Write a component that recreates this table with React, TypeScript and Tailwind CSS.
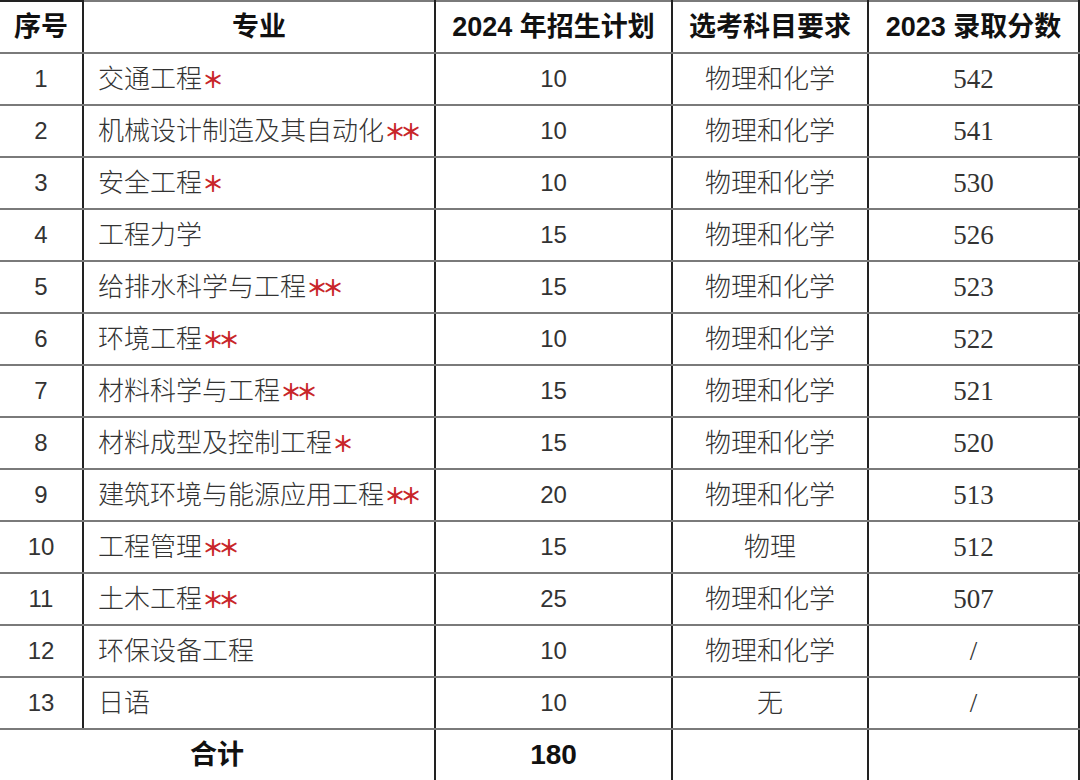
const rows: [string, string, number, string, string, string][] = [
  ['1', '交通工程', 1, '10', '物理和化学', '542'],
  ['2', '机械设计制造及其自动化', 2, '10', '物理和化学', '541'],
  ['3', '安全工程', 1, '10', '物理和化学', '530'],
  ['4', '工程力学', 0, '15', '物理和化学', '526'],
  ['5', '给排水科学与工程', 2, '15', '物理和化学', '523'],
  ['6', '环境工程', 2, '10', '物理和化学', '522'],
  ['7', '材料科学与工程', 2, '15', '物理和化学', '521'],
  ['8', '材料成型及控制工程', 1, '15', '物理和化学', '520'],
  ['9', '建筑环境与能源应用工程', 2, '20', '物理和化学', '513'],
  ['10', '工程管理', 2, '15', '物理', '512'],
  ['11', '土木工程', 2, '25', '物理和化学', '507'],
  ['12', '环保设备工程', 0, '10', '物理和化学', '/'],
  ['13', '日语', 0, '10', '无', '/'],
]

const sans = "font-['Liberation_Sans','Noto_Sans_CJK_SC',sans-serif]"
const cell = 'h-[52px] border-y-2 border-y-[#7a7a7a] border-x-2 border-x-[#222] p-0'

export default function App() {
  return (
    <div className={`h-[780px] w-[1080px] bg-white ${sans}`}>
      <table className="table-fixed border-collapse text-[#333]">
        <colgroup>
          <col className="w-[83px]" />
          <col className="w-[352px]" />
          <col className="w-[237px]" />
          <col className="w-[196px]" />
          <col className="w-[211px]" />
        </colgroup>
        <thead>
          <tr className="text-[27px] font-bold text-[#111]">
            <th className={`${cell} border-t-[#222] border-l-0`}>序号</th>
            <th className={cell}>专业</th>
            <th className={cell}>2024 年招生计划</th>
            <th className={cell}>选考科目要求</th>
            <th className={cell}>2023 录取分数</th>
          </tr>
        </thead>
        <tbody className="text-[24px]">
          {rows.map(([no, name, stars, plan, subj, score]) => (
            <tr key={no}>
              <td className={`${cell} border-l-0 text-center`}>{no}</td>
              <td className={`${cell} pl-[14px] text-[26px] font-light`}>
                {name}
                {stars > 0 && (
                  <span className="text-[22px] font-bold tracking-[-6px] text-[#c8262a]">
                    {'＊'.repeat(stars)}
                  </span>
                )}
              </td>
              <td className={`${cell} text-center`}>{plan}</td>
              <td className={`${cell} text-center text-[26px] font-light`}>{subj}</td>
              <td className={`${cell} text-center font-['Liberation_Serif',serif] text-[27px]`}>{score}</td>
            </tr>
          ))}
          <tr className="font-bold text-[#111]">
            <td colSpan={2} className={`${cell} border-b-[#222] border-l-0 text-center text-[27px]`}>合计</td>
            <td className={`${cell} border-b-[#222] text-center text-[28px]`}>180</td>
            <td className={`${cell} border-b-[#222]`}></td>
            <td className={`${cell} border-b-[#222]`}></td>
          </tr>
        </tbody>
      </table>
    </div>
  )
}
